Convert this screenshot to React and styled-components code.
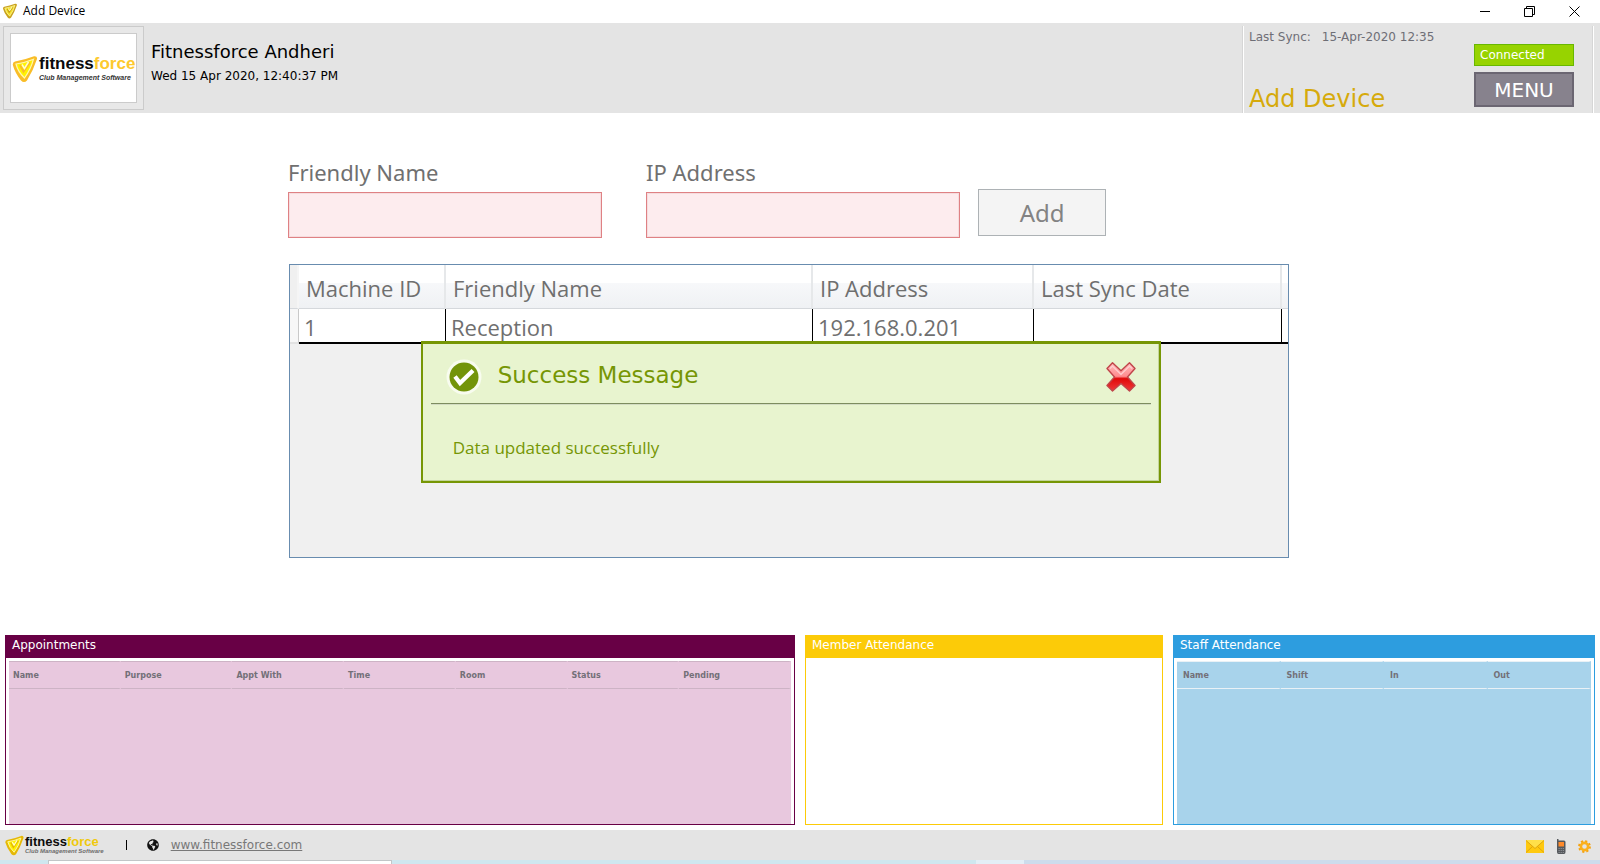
import React from "react";
import styled, { createGlobalStyle } from "styled-components";
import { FaGlobeAmericas } from "react-icons/fa";

const wide = `"DejaVu Sans", Verdana, sans-serif`;
const humanist = `"Open Sans", "Segoe UI", sans-serif`;
const label = `"Noto Sans", Tahoma, sans-serif`;

const GlobalStyle = createGlobalStyle`
  *, *::before, *::after { box-sizing: border-box; }
  body { margin: 0; background: #fff; font-family: ${wide}; }
  button, input { font: inherit; margin: 0; border-radius: 0; }
`;

const Page = styled.div`
  min-height: 100vh;
  display: flex;
  flex-direction: column;
`;

/* Window title bar */
const TitleBar = styled.div`
  display: flex;
  align-items: center;
  height: 23px;
  padding: 0 3px 1px 2px;
  font: 12px/20px ${humanist};
  color: #000;
`;
const TitleText = styled.span`
  flex: 1;
  padding-left: 5px;
`;
const WindowButton = styled.button`
  display: grid;
  place-items: center;
  width: 45px;
  height: 20px;
  padding: 0;
  border: 0;
  background: none;
`;

/* Header */
const Header = styled.header`
  display: flex;
  height: 90px;
  padding: 3px 6px 0 3px;
  background: #e4e4e4;
`;
const LogoFrame = styled.div`
  width: 141px;
  height: 84px;
  padding: 6px;
  border: 1px solid #cbcbcb;
  background: #e8e8e8;
`;
const LogoBox = styled.div`
  display: flex;
  align-items: center;
  height: 100%;
  padding-top: 2px;
  border: 1px solid #cbcbcb;
  background: #fff;
`;
const LogoLockup = styled.div`
  display: flex;
  align-items: center;
  font-family: "Liberation Sans", Arial, sans-serif;
  font-weight: bold;
  white-space: nowrap;
`;
const LogoWords = styled.div`
  display: flex;
  flex-direction: column;
  color: #0b0b0b;
`;
const LogoName = styled.span`
  font-size: ${(p) => (p.$small ? "13px" : "17px")};
  line-height: ${(p) => (p.$small ? "13px" : "18px")};
  b { color: ${(p) => (p.$small ? "#f0c90c" : "#fdc92d")}; }
`;
const LogoTag = styled.span`
  font-style: italic;
  font-size: ${(p) => (p.$small ? "6px" : "7px")};
  line-height: ${(p) => (p.$small ? "7px" : "10px")};
  color: ${(p) => (p.$small ? "#6d6d6d" : "#333")};
`;
const ClubInfo = styled.div`
  flex: 1;
  padding: 14px 0 0 7px;
  color: #000;
`;
const ClubName = styled.div`
  font-size: 18px;
  line-height: 24px;
`;
const ClubTime = styled.div`
  padding-top: 4px;
  font-size: 12px;
  line-height: 16px;
`;
const Status = styled.div`
  display: flex;
  justify-content: space-between;
  width: 351px;
  padding: 0 19px 0 5px;
  border-left: 1px solid #fff;
  border-right: 1px solid #fff;
  box-shadow: -1px 0 #d6d6d6, inset -1px 0 #d6d6d6;
`;
const SyncColumn = styled.div`
  display: flex;
  flex-direction: column;
  justify-content: space-between;
`;
const SyncText = styled.div`
  display: flex;
  gap: 11px;
  padding-top: 3px;
  font-size: 12px;
  line-height: 16px;
  color: #6e6e76;
`;
const PageTitle = styled.h1`
  margin: 0;
  font-weight: normal;
  font-size: 24px;
  line-height: 28px;
  color: #d6aa0b;
`;
const ButtonColumn = styled.div`
  display: flex;
  flex-direction: column;
  gap: 6px;
  width: 100px;
  padding-top: 18px;
`;
const Connected = styled.div`
  padding: 0 5px;
  border: 1px solid #68b800;
  background: #97d300;
  color: #fff;
  font-size: 12px;
  line-height: 20px;
`;
const MenuButton = styled.button`
  height: 35px;
  padding: 0;
  border: 2px solid #6b6672;
  background: #87828d;
  color: #fff;
  font-size: 20px;
  line-height: 28px;
`;

/* Device form and grid */
const Main = styled.main`
  flex: 1;
  padding: 44px 19.4% 70px 18%;
`;
const Form = styled.form`
  display: flex;
  align-items: flex-end;
  gap: 18px;
  padding-bottom: 26px;
`;
const Fields = styled.div`
  display: flex;
  gap: 44px;
  width: 67.1%;
`;
const Field = styled.label`
  flex: 1;
  display: flex;
  flex-direction: column;
  gap: 5px;
  font: 22px/30px ${label};
  color: #707070;
`;
const TextInput = styled.input`
  width: 100%;
  height: 46px;
  padding: 0 8px;
  border: 1px solid #df8184;
  background: #fdecee;
  box-shadow: inset 0 0 0 1px #f6dcde;
  outline: 0;
`;
const AddButton = styled.button`
  width: 128px;
  height: 47px;
  margin-bottom: 2px;
  padding: 0;
  border: 1px solid #adb2b5;
  background: #f4f4f4;
  color: #838383;
  font: 24px/30px ${label};
`;
const DevicePanel = styled.section`
  position: relative;
  height: 294px;
  margin: 0 1px;
  border: 1px solid #688caf;
  background: #f0f0f0;
`;
const DeviceTable = styled.table`
  width: 100%;
  table-layout: fixed;
  border-spacing: 0;
  font: 22px/30px ${humanist};
  color: #6f6f6f;
  text-align: left;
`;
const HeadCell = styled.th`
  height: 44px;
  padding: 2px 0 0 7px;
  font-weight: normal;
  border-right: 2px solid #e6e8ea;
  border-bottom: 1px solid #d5d8dc;
  background: linear-gradient(#fff 0 42%, #f7f8fa 42%, #eff1f4 100%);
  &:first-child {
    padding: 0;
    border-right-color: #f5f5f5;
    background: #f0f0f0;
  }
  &:last-child { padding: 0; border-right: 0; }
`;
const Cell = styled.td`
  height: 35px;
  padding: 3px 0 0 5px;
  line-height: 28px;
  border-right: 1px solid #000;
  border-bottom: 2px solid #000;
  background: #fff;
  &:first-child {
    padding: 0;
    border-right-color: #c9c9c9;
    border-bottom-color: #e2e2e2;
    background: #f7f7f7;
  }
  &:last-child { padding: 0; border-right: 0; }
`;

/* Message box over the grid */
const Message = styled.div`
  position: absolute;
  top: 76px;
  left: 13.1%;
  width: 74.2%;
  padding: 0 8px 21px;
  border: 2px solid #769604;
  border-top-width: 3px;
  background: #e8f4cf;
  box-shadow: inset -1px -1px #c3d59a;
  color: #769604;
`;
const MessageHead = styled.div`
  display: flex;
  align-items: center;
  height: 60px;
  padding: 6px 15px 0 15px;
  border-bottom: 1px solid #7d8c60;
  box-shadow: 0 1px #d3dcc3;
`;
const MessageTitle = styled.h2`
  flex: 1;
  margin: 0;
  padding: 0 0 3px 16px;
  font-weight: normal;
  font-size: 23px;
  line-height: 30px;
`;
const MessageText = styled.p`
  margin: 0;
  padding: 31px 22px 0;
  font: 17px/25px ${humanist};
`;
const IconButton = styled.button`
  display: flex;
  padding: 0;
  border: 0;
  background: none;
`;

/* Bottom panels */
const Panels = styled.div`
  display: grid;
  grid-template-columns: 790fr 358fr 422fr;
  gap: 10px;
  padding: 0 5px 5px;
`;
const Panel = styled.section`
  display: flex;
  flex-direction: column;
  height: 190px;
  border: 1px solid ${(p) => p.$color};
  background: #fff;
`;
const PanelTitle = styled.h2`
  margin: 0;
  padding: 0 6px 4px;
  background: ${(p) => p.$color};
  color: #fff;
  font-weight: normal;
  font-size: 12px;
  line-height: 18px;
`;
const PanelBody = styled.div`
  flex: 1;
  margin: 3px 3px 0;
  background: ${(p) => p.$fill};
`;
const ListTable = styled.table`
  width: 100%;
  table-layout: fixed;
  border-spacing: 0;
  text-align: left;
  font-size: 8px;
  line-height: 12px;
  color: #737078;
  th {
    height: 28px;
    padding: 2px 0 0 ${(p) => p.$pad}px;
    border-top: 1px solid ${(p) => p.$line};
    border-bottom: 1px solid ${(p) => p.$line};
    border-right: 2px solid ${(p) => p.$fill};
  }
`;

/* Footer */
const Footer = styled.footer`
  display: flex;
  align-items: center;
  height: 30px;
  padding: 0 9px 0 4px;
  background: #e4e4e4;
`;
const Divider = styled.span`
  width: 1px;
  height: 10px;
  margin: 0 20px 0 22px;
  background: #000;
`;
const SiteLink = styled.a`
  margin: 0 auto 0 12px;
  font-size: 12px;
  line-height: 16px;
  color: #787878;
`;
const FooterIcons = styled.div`
  display: flex;
  align-items: center;
  gap: 12px;
  padding-top: 3px;
`;
const Desktop = styled.div`
  height: 4px;
  padding-left: 48px;
  background: linear-gradient(90deg, #cfe7ef 0 61%, #e3eef6 61% 64%, #cddcec 64%);
`;
const SearchEdge = styled.div`
  width: 344px;
  height: 4px;
  border: 1px solid #c2c6c8;
  border-bottom: 0;
  background: #fff;
`;

function Mark({ size, outer = "#f7bd24", inner = "#fff200" }) {
  return (
    <svg width={size} height={size} viewBox="0 0 26 28" aria-hidden="true">
      <path d="M3 6.500Q12 5 22 1.200Q25.500.800 25 4Q21 16 15 25.500Q12 28.500 9 25.500Q3 18 .800 10Q.600 7 3 6.500Z" fill={outer} />
      <path d="M4 9Q12 8 21.500 4.200Q19 14 12.500 23Q6 17 4 9Z" fill={inner} stroke="#fff8b0" strokeWidth="1.200" />
      <path d="M8 10L11.500 16.500L18 7.500" fill="none" stroke={outer} strokeWidth="2" />
      <path d="M10 9.500L12.500 13.500L16.500 7" fill="none" stroke="#fffbd0" strokeWidth="1.500" />
    </svg>
  );
}

function Logo({ small }) {
  return (
    <LogoLockup>
      <Mark size={small ? 21 : 28} outer={small ? "#e5b806" : "#f9bd27"} />
      <LogoWords>
        <LogoName $small={small}>fitness<b>force</b></LogoName>
        <LogoTag $small={small}>Club Management Software</LogoTag>
      </LogoWords>
    </LogoLockup>
  );
}

function CheckIcon() {
  return (
    <svg width="36" height="36" viewBox="0 0 36 36" aria-hidden="true">
      <circle cx="18" cy="18" r="17.500" fill="#f8fcef" />
      <circle cx="18" cy="18" r="14.500" fill="#73940a" />
      <path d="M9 17.500L14 24L27 11.500" fill="none" stroke="#fff" strokeWidth="4.200" />
    </svg>
  );
}

function CrossIcon() {
  return (
    <svg width="30" height="30" viewBox="0 0 30 30" aria-hidden="true">
      <defs>
        <linearGradient id="cross" x1="0" y1="0" x2="0" y2="1">
          <stop offset="0" stopColor="#fbb" />
          <stop offset=".48" stopColor="#ff8c8f" />
          <stop offset=".56" stopColor="#e00a0a" />
          <stop offset="1" stopColor="#ef3a3a" />
        </linearGradient>
      </defs>
      <path d="M6.500.800L15 8.800L23.500.800L29 6.500L21.500 15L29 23.500L23.500 29L15 21.500L6.500 29L1 23.500L8.500 15L1 6.500Z" fill="url(#cross)" stroke="#c0454a" strokeWidth="1.400" strokeLinejoin="round" />
      <path d="M4 6.500L6.500 4L15 12.500L23.500 4L26 6.500" fill="none" stroke="#ffd0d2" strokeWidth="1.200" />
    </svg>
  );
}

function MailIcon() {
  return (
    <svg width="18" height="13" viewBox="0 0 18 13" aria-hidden="true">
      <rect width="18" height="13" fill="#ffc90f" />
      <path d="M0 0H18L9 8.500Z" fill="#ffe04a" />
      <path d="M0 .500L9 8.500L18 .500M0 12.500L6.500 6.500M18 12.500L11.500 6.500" fill="none" stroke="#d9a010" strokeWidth=".9" />
    </svg>
  );
}

function PhoneIcon() {
  return (
    <svg width="10" height="15" viewBox="0 0 10 15" aria-hidden="true">
      <path d="M1 0H2.500V1.500H8Q9.500 1.500 9.500 3V13Q9.500 15 8 15H2.500Q1 15 1 13Z" fill="#55585c" />
      <rect x="2.500" y="3" width="5.500" height="4.500" fill="#ff8a2a" />
      <path d="M2.500 9.500H8M2.500 11.500H8M2.500 13.500H8" stroke="#8b8e92" strokeDasharray="1.300 .8" />
    </svg>
  );
}

function GearIcon() {
  return (
    <svg width="13" height="13" viewBox="0 0 13 13" aria-hidden="true">
      <circle cx="6.500" cy="6.500" r="5.300" fill="none" stroke="#f5a210" strokeWidth="2.200" strokeDasharray="2.100 2.062" />
      <circle cx="6.500" cy="6.500" r="3.600" fill="none" stroke="#fbb01c" strokeWidth="2.600" />
    </svg>
  );
}

const appointmentColumns = ["Name", "Purpose", "Appt With", "Time", "Room", "Status", "Pending"];
const staffColumns = ["Name", "Shift", "In", "Out"];

function ListPanel({ title, color, fill, line, pad, columns }) {
  return (
    <Panel $color={color}>
      <PanelTitle $color={color}>{title}</PanelTitle>
      {columns && (
        <PanelBody $fill={fill}>
          <ListTable $fill={fill} $line={line} $pad={pad}>
            <thead>
              <tr>{columns.map((c) => <th key={c} scope="col">{c}</th>)}</tr>
            </thead>
          </ListTable>
        </PanelBody>
      )}
    </Panel>
  );
}

export default function App() {
  return (
    <Page>
      <GlobalStyle />
      <TitleBar>
        <Mark size={16} outer="#c9a21c" inner="#f7e626" />
        <TitleText>Add Device</TitleText>
        <WindowButton aria-label="Minimize">
          <svg width="10" height="10"><path d="M0 5.500H10" stroke="#000" /></svg>
        </WindowButton>
        <WindowButton aria-label="Restore">
          <svg width="11" height="11" fill="none" stroke="#000">
            <path d="M.500 2.500H8.500V10.500H.500ZM2.500 2.500V.500H10.500V8.500H8.500" />
          </svg>
        </WindowButton>
        <WindowButton aria-label="Close">
          <svg width="11" height="11"><path d="M.500.500L10.500 10.500M10.500.500L.500 10.500" stroke="#000" /></svg>
        </WindowButton>
      </TitleBar>

      <Header>
        <LogoFrame><LogoBox><Logo /></LogoBox></LogoFrame>
        <ClubInfo>
          <ClubName>Fitnessforce Andheri</ClubName>
          <ClubTime>Wed 15 Apr 2020, 12:40:37 PM</ClubTime>
        </ClubInfo>
        <Status>
          <SyncColumn>
            <SyncText><span>Last Sync:</span><span>15-Apr-2020 12:35</span></SyncText>
            <PageTitle>Add Device</PageTitle>
          </SyncColumn>
          <ButtonColumn>
            <Connected>Connected</Connected>
            <MenuButton>MENU</MenuButton>
          </ButtonColumn>
        </Status>
      </Header>

      <Main>
        <Form onSubmit={(e) => e.preventDefault()}>
          <Fields>
            <Field>Friendly Name<TextInput type="text" /></Field>
            <Field>IP Address<TextInput type="text" /></Field>
          </Fields>
          <AddButton disabled>Add</AddButton>
        </Form>
        <DevicePanel>
          <DeviceTable>
            <colgroup>
              <col width="9" /><col width="147" /><col width="367" />
              <col width="221" /><col width="248" /><col width="6" />
            </colgroup>
            <thead>
              <tr>
                <HeadCell />
                <HeadCell scope="col">Machine ID</HeadCell>
                <HeadCell scope="col">Friendly Name</HeadCell>
                <HeadCell scope="col">IP Address</HeadCell>
                <HeadCell scope="col">Last Sync Date</HeadCell>
                <HeadCell />
              </tr>
            </thead>
            <tbody>
              <tr>
                <Cell />
                <Cell>1</Cell>
                <Cell>Reception</Cell>
                <Cell>192.168.0.201</Cell>
                <Cell />
                <Cell />
              </tr>
            </tbody>
          </DeviceTable>
          <Message role="dialog" aria-labelledby="message-title">
            <MessageHead>
              <CheckIcon />
              <MessageTitle id="message-title">Success Message</MessageTitle>
              <IconButton aria-label="Close message"><CrossIcon /></IconButton>
            </MessageHead>
            <MessageText>Data updated successfully</MessageText>
          </Message>
        </DevicePanel>
      </Main>

      <Panels>
        <ListPanel title="Appointments" color="#680045" fill="#e8c8de" line="#cdb3c5" pad={4} columns={appointmentColumns} />
        <ListPanel title="Member Attendance" color="#fccb08" />
        <ListPanel title="Staff Attendance" color="#2d9ddf" fill="#a8d3eb" line="#e9f1f6" pad={6} columns={staffColumns} />
      </Panels>

      <Footer>
        <Logo small />
        <Divider />
        <FaGlobeAmericas size={12} color="#111" aria-hidden="true" />
        <SiteLink href="http://www.fitnessforce.com">www.fitnessforce.com</SiteLink>
        <FooterIcons>
          <IconButton aria-label="Messages"><MailIcon /></IconButton>
          <IconButton aria-label="Phone"><PhoneIcon /></IconButton>
          <IconButton aria-label="Settings"><GearIcon /></IconButton>
        </FooterIcons>
      </Footer>
      <Desktop><SearchEdge /></Desktop>
    </Page>
  );
}
